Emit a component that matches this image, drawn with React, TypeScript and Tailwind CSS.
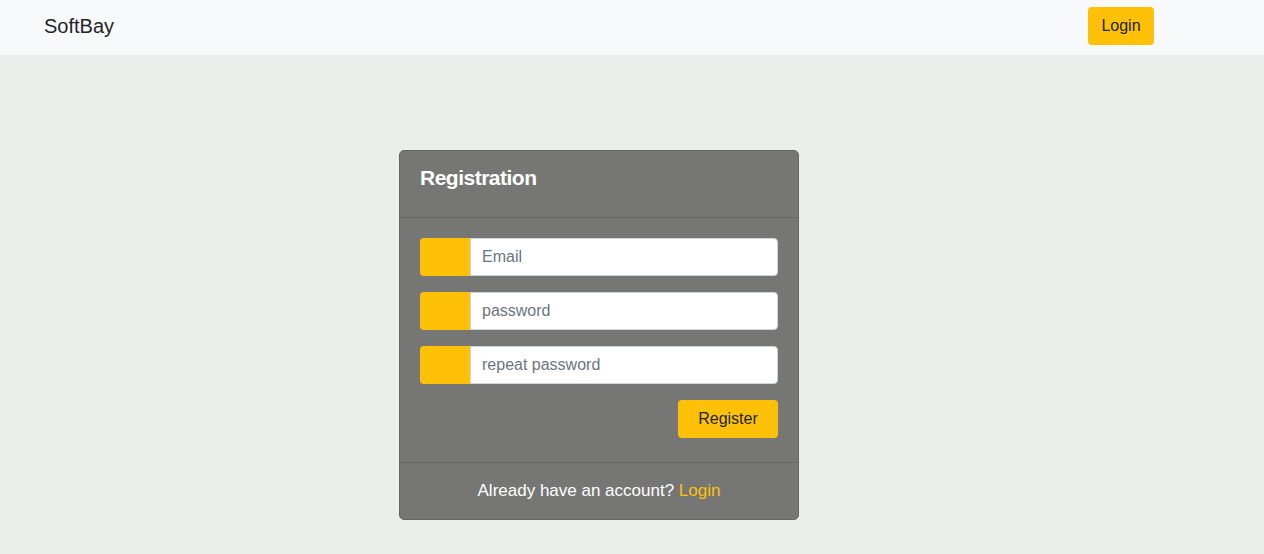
export default function App() {
  const fields = [
    { placeholder: "Email", type: "email" },
    { placeholder: "password", type: "password" },
    { placeholder: "repeat password", type: "password" },
  ];

  return (
    <div className="min-h-[554px] bg-[#eceeec] font-['Liberation_Sans',Arial,sans-serif]">
      {/* Navbar */}
      <nav className="h-[55px] bg-[#f8f9fa] flex items-center justify-between pl-[44px] pr-[110px] pb-[3px]">
        <span className="text-[20px] text-[#212529]">SoftBay</span>
        <button className="h-[38px] px-[13px] w-[66px] rounded-[4px] bg-[#ffc107] text-[16px] text-[#212529]">
          Login
        </button>
      </nav>

      {/* Card */}
      <div className="flex justify-center pt-[95px] pb-[34px] pr-[66px]">
        <div className="w-[400px] rounded-[5px] border border-[#646564] bg-[#767775] overflow-hidden">
          <div className="pl-5 pt-[14px] pb-[26px] border-b border-[#676867]">
            <h2 className="text-[21px] leading-[26px] font-bold text-white tracking-[-0.5px]">Registration</h2>
          </div>

          <div className="px-5 pt-5 pb-6 border-b border-[#676867]">
            <div className="flex flex-col gap-4">
              {fields.map((f) => (
                <div key={f.placeholder} className="flex h-[38px]">
                  <span className="w-[50px] rounded-l-[4px] bg-[#ffc107]" />
                  <input
                    type={f.type}
                    placeholder={f.placeholder}
                    className="flex-1 min-w-0 pl-[11px] pr-3 rounded-r-[4px] border border-[#ced4da] bg-white text-[16px] text-[#212529] placeholder:text-[#6c757d] outline-none"
                  />
                </div>
              ))}
            </div>
            <div className="flex justify-end mt-4">
              <button className="w-[100px] h-[38px] rounded-[4px] bg-[#ffc107] text-[16px] text-[#212529]">
                Register
              </button>
            </div>
          </div>

          <div className="h-[56px] flex items-center justify-center text-[17px] text-white">
            Already have an account?&nbsp;<a href="#" className="text-[#ffc107]">Login</a>
          </div>
        </div>
      </div>
    </div>
  );
}
